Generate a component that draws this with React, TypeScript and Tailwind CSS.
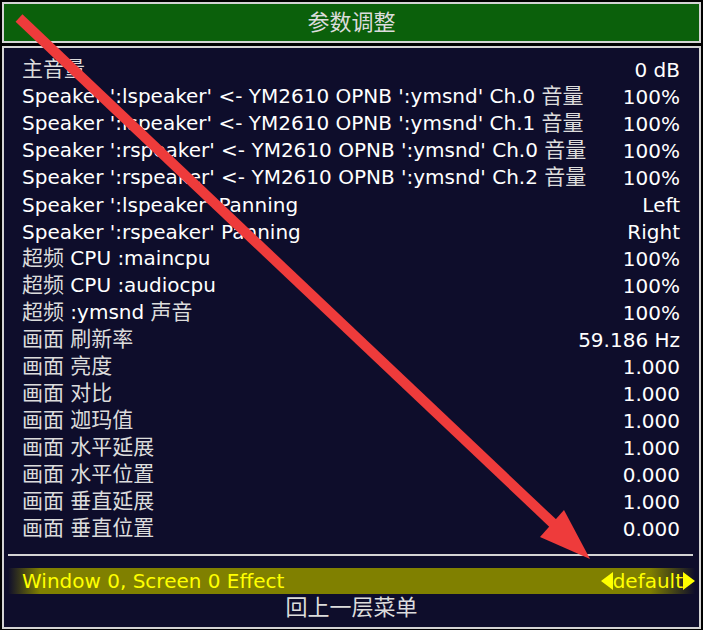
const rows: [string, string][] = [
  ["主音量", "0 dB"],
  ["Speaker ':lspeaker' <- YM2610 OPNB ':ymsnd' Ch.0 音量", "100%"],
  ["Speaker ':lspeaker' <- YM2610 OPNB ':ymsnd' Ch.1 音量", "100%"],
  ["Speaker ':rspeaker' <- YM2610 OPNB ':ymsnd' Ch.0 音量", "100%"],
  ["Speaker ':rspeaker' <- YM2610 OPNB ':ymsnd' Ch.2 音量", "100%"],
  ["Speaker ':lspeaker' Panning", "Left"],
  ["Speaker ':rspeaker' Panning", "Right"],
  ["超频 CPU :maincpu", "100%"],
  ["超频 CPU :audiocpu", "100%"],
  ["超频 :ymsnd 声音", "100%"],
  ["画面 刷新率", "59.186 Hz"],
  ["画面 亮度", "1.000"],
  ["画面 对比", "1.000"],
  ["画面 迦玛值", "1.000"],
  ["画面 水平延展", "1.000"],
  ["画面 水平位置", "0.000"],
  ["画面 垂直延展", "1.000"],
  ["画面 垂直位置", "0.000"],
];

// CJK glyphs in the MAME font sit a bit larger and lighter than the Latin ones
const Label = ({ text }: { text: string }) => (
  <span className="whitespace-nowrap">
    {text.split(/([\u4e00-\u9fff]+)/).map((part, i) =>
      /[\u4e00-\u9fff]/.test(part) ? (
        <span key={i} className="text-[21px] text-[#dcdcdc]">
          {part}
        </span>
      ) : (
        <span key={i}>{part}</span>
      )
    )}
  </span>
);

const ArrowOverlay = () => (
  <svg
    className="pointer-events-none absolute left-0 top-0"
    width="703"
    height="630"
    viewBox="0 0 703 630"
  >
    <line x1="19" y1="18" x2="560" y2="530" stroke="#ee3b3b" strokeWidth="10" />
    <polygon points="590,559 540,537 564,510" fill="#ee3b3b" />
  </svg>
);

export default function App() {
  return (
    <div
      className="relative h-[630px] w-[703px] overflow-hidden bg-black text-[20px] text-white"
      style={{ fontFamily: '"DejaVu Sans", "Noto Sans CJK SC", sans-serif' }}
    >
      <div className="flex flex-col gap-[3px] p-[2px]">
        <div className="flex h-[41px] items-center justify-center border-2 border-[#d4d4d4] bg-[#0b600b] text-[22px] text-[#dcdcdc]">
          参数调整
        </div>
        <div className="flex h-[583px] flex-col border-2 border-[#d4d4d4] bg-[#0e0d2b] px-[4px]">
          <div className="flex flex-col pl-[14px] pr-[15px] pt-[8px]">
            {rows.map(([label, value], i) => (
              <div key={i} className="flex h-[27px] items-center justify-between leading-none">
                <Label text={label} />
                <span className="whitespace-nowrap">{value}</span>
              </div>
            ))}
          </div>
          <div className="mt-[12px] mr-[2px] h-[2px] bg-[#d4d4d4]" />
          <div className="mt-[12px] flex h-[26px] items-center justify-between bg-[linear-gradient(to_right,#0e0d2b,#808000_32px,#808000_calc(100%_-_45px),#0e0d2b)] pl-[14px] text-[#ffff00] leading-none">
            <span>Window 0, Screen 0 Effect</span>
            <span className="flex items-center">
              <svg width="12" height="18" viewBox="0 0 12 18">
                <polygon points="12,0 0,9 12,18" fill="#ffff00" />
              </svg>
              <span>default</span>
              <svg width="12" height="18" viewBox="0 0 12 18">
                <polygon points="0,0 12,9 0,18" fill="#ffff00" />
              </svg>
            </span>
          </div>
          <div className="flex h-[28px] items-center justify-center text-[22px] text-[#dcdcdc] leading-none">
            回上一层菜单
          </div>
        </div>
      </div>
      <ArrowOverlay />
    </div>
  );
}
